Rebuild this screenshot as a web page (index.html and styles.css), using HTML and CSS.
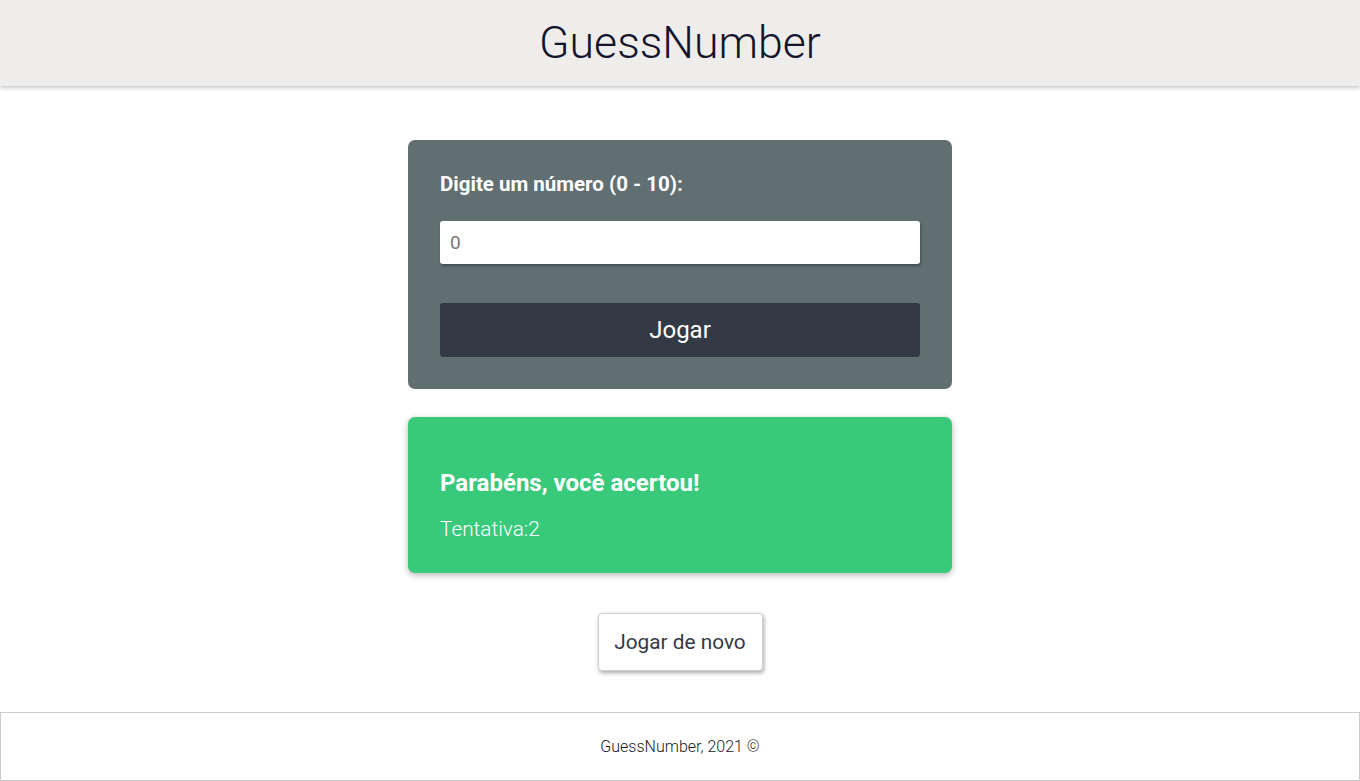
FILE: index.html
```html
<!DOCTYPE html>
<html lang="pt-BR">
<head>
<meta charset="utf-8">
<title>GuessNumber</title>
<link rel="stylesheet" href="styles.css">
</head>
<body>
<header class="topbar">
  <h1 class="brand">GuessNumber</h1>
</header>
<main class="content">
  <section class="card card-form">
    <label class="field-label" for="guess">Digite um número (0 - 10):</label>
    <input class="field-input" id="guess" type="text" placeholder="0">
    <button class="btn-play" type="button">Jogar</button>
  </section>
  <section class="card card-result">
    <h2 class="result-title">Parabéns, você acertou!</h2>
    <p class="result-text">Tentativa:2</p>
  </section>
  <button class="btn-again" type="button">Jogar de novo</button>
</main>
<footer class="footer">GuessNumber, 2021 ©</footer>
</body>
</html>
```

FILE: styles.css
```css
* { box-sizing: border-box; }
html, body { margin: 0; padding: 0; }
body {
  font-family: Roboto, "Liberation Sans", sans-serif;
  background: #ffffff;
  color: #333;
}
.topbar {
  height: 86px;
  background: #eeedeb;
  box-shadow: 0 2px 4px rgba(0,0,0,0.22);
  display: flex;
  align-items: center;
  justify-content: center;
  position: relative;
}
.brand {
  margin: 0;
  font-weight: 300;
  font-size: 44.6px;
  color: #14142b;
  line-height: 1;
}
.content {
  display: flex;
  flex-direction: column;
  align-items: center;
  padding-top: 54px;
}
.card {
  width: 544px;
  border-radius: 7px;
  padding: 32px;
}
.card-form {
  background: #616f72;
  display: flex;
  flex-direction: column;
}
.field-label {
  color: #ffffff;
  font-weight: 700;
  font-size: 20.5px;
  line-height: 24px;
}
.field-input {
  margin-top: 25px;
  height: 43px;
  border: none;
  border-radius: 3px;
  background: #fff;
  box-shadow: 1px 2px 3px rgba(0,0,0,0.3);
  padding: 0 10px;
  font-family: inherit;
  font-size: 19px;
  color: #333;
  outline: none;
}
.field-input::placeholder { color: #777; }
.btn-play {
  margin-top: 39px;
  height: 54px;
  border: none;
  border-radius: 3px;
  background: #343a45;
  color: #ffffff;
  font-family: inherit;
  font-size: 24px;
  font-weight: 400;
}
.card-result {
  margin-top: 28px;
  background: #38ca7a;
  box-shadow: 0 2px 6px rgba(0,0,0,0.3);
  padding-top: 52px;
  color: #ffffff;
}
.result-title {
  margin: 0;
  font-size: 24px;
  line-height: 28px;
  font-weight: 700;
}
.result-text {
  margin: 20px 0 0;
  font-size: 20.8px;
  line-height: 24px;
  font-weight: 300;
}
.btn-again {
  margin-top: 40px;
  width: 165px;
  height: 58px;
  background: #ffffff;
  border: 1px solid #d0d0d0;
  border-radius: 4px;
  box-shadow: 1px 2px 4px rgba(0,0,0,0.35);
  font-family: inherit;
  font-size: 20.8px;
  color: #333a45;
}
.footer {
  margin-top: 41px;
  height: 69px;
  border: 1px solid #cccccc;
  display: flex;
  align-items: center;
  justify-content: center;
  font-size: 16px;
  font-weight: 300;
  color: #222;
}
```
